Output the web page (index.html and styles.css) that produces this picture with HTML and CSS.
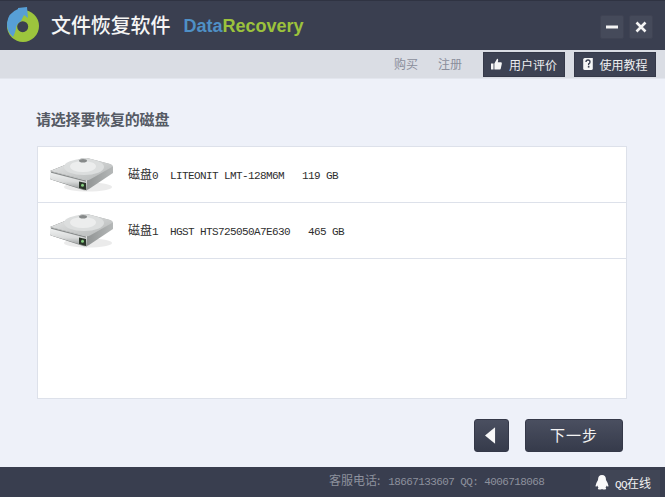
FILE: index.html
```html
<!DOCTYPE html>
<html lang="zh">
<head>
<meta charset="utf-8">
<title>文件恢复软件</title>
<link rel="stylesheet" href="styles.css">
</head>
<body>
<div class="window">
  <svg width="0" height="0" class="defs">
    <defs>
      <linearGradient id="top" x1="0" y1="0" x2="1" y2="1"><stop offset="0" stop-color="#e9eaea"/><stop offset="1" stop-color="#b4b7b7"/></linearGradient>
      <linearGradient id="front" x1="0" y1="0" x2="0" y2="1"><stop offset="0" stop-color="#f4f5f5"/><stop offset=".55" stop-color="#d8dada"/><stop offset="1" stop-color="#8c8f8f"/></linearGradient>
      <linearGradient id="side" x1="0" y1="0" x2="1" y2="0"><stop offset="0" stop-color="#5f6262"/><stop offset="1" stop-color="#b5b8b8"/></linearGradient>
      <filter id="soft"><feGaussianBlur stdDeviation=".4"/></filter>
      <symbol id="disk" viewBox="0 0 64 36">
        <g filter="url(#soft)">
          <ellipse cx="38" cy="30" rx="24" ry="4.500" fill="#dedede" opacity=".6"/>
          <path d="M0 14 L30 2 Q33 .5 37 1 L60 7 Q63 8 63 10 L63 16 L39 32 Q36 34 33 33 L1 22.500 Q0 22 0 21Z" fill="url(#side)"/>
          <path d="M0 14 L37 23 L37 33.500 L1 22.500 Q0 22 0 21Z" fill="url(#front)"/>
          <path d="M0 14 L30 2 Q33 .5 37 1 L60 7 Q63 8 62 10 L40 22.500 Q38 23.500 36 23Z" fill="url(#top)"/>
          <path d="M1 14.500 L36 23.500 L36 24.800 L1 15.800Z" fill="#8a8d8d"/>
          <ellipse cx="34" cy="10" rx="20" ry="8" fill="#dcdede"/>
          <ellipse cx="33" cy="9.500" rx="13" ry="5.500" fill="#eceded"/>
          <ellipse cx="33" cy="3.800" rx="4" ry="1.800" fill="#868989"/>
          <path d="M29 24.500 L36 26 L36 33 L29 31Z" fill="#2c362b"/>
          <circle cx="32.500" cy="28.300" r="1.500" fill="#86cc80"/>
        </g>
      </symbol>
    </defs>
  </svg>
  <header class="titlebar">
    <svg class="logo" width="36" height="38" viewBox="5 4 36 38">
      <circle cx="23" cy="26" r="16" fill="#9cc53d"/>
      <circle cx="22.700" cy="26.700" r="5.500" fill="#3a3f50"/>
      <path d="M13 37 Q6.500 31 7 23 Q8 13 18 9 L18 8 L27 7 L28 18 L24 15 L21 21 Q16 24 16 29 Q15 33 13 37Z" fill="#579fd6"/>
    </svg>
    <span class="app-name">文件恢复软件</span>
    <span class="brand"><span class="brand-data">Data</span><span class="brand-recovery">Recovery</span></span>
    <div class="win-controls">
      <button class="win-btn" type="button"><svg width="12" height="4" viewBox="0 0 12 4"><rect width="12" height="3" y=".5" fill="#f4f4f4"/></svg></button>
      <button class="win-btn" type="button"><svg width="12" height="12" viewBox="0 0 12 12"><path d="M1.500 1.500 L10.500 10.500 M10.500 1.500 L1.500 10.500" stroke="#f4f4f4" stroke-width="2.600"/></svg></button>
    </div>
  </header>
  <nav class="toolbar">
    <a class="link">购买</a>
    <a class="link link-reg">注册</a>
    <a class="tool-btn tool-first">
      <svg width="11" height="12" viewBox="0 0 13 14"><path d="M0 6.500 H3 V13.500 H0Z M4 6.500 L7 1 Q8.500 .5 8.500 2.500 L8 5 H12 Q13 5.500 12.800 6.800 L11.500 12.500 Q11 13.500 10 13.500 H4Z" fill="#f6f6f6"/></svg>
      <span>用户评价</span>
    </a>
    <a class="tool-btn">
      <svg width="10" height="12" viewBox="0 0 12 15"><path d="M2 0 H12 V13 Q12 15 10 15 H2 Q0 15 0 13 V2 Q0 0 2 0Z" fill="#f6f6f6"/><path d="M3.500 5 Q3.500 2.500 6 2.500 Q8.500 2.500 8.500 5 Q8.500 6.500 6.800 7.300 L6.800 9" fill="none" stroke="#3a3f50" stroke-width="1.700"/><rect x="5.800" y="10" width="2" height="2" fill="#3a3f50"/></svg>
      <span>使用教程</span>
    </a>
  </nav>
  <main class="content">
    <h1 class="heading">请选择要恢复的磁盘</h1>
    <ul class="disk-list">
      <li class="disk-row">
        <svg class="disk-icon" width="64" height="36"><use href="#disk"/></svg>
        <span class="disk-text"><span class="cjk">磁盘</span>0  LITEONIT LMT-128M6M   119 GB</span>
      </li>
      <li class="disk-row">
        <svg class="disk-icon" width="64" height="36"><use href="#disk"/></svg>
        <span class="disk-text"><span class="cjk">磁盘</span>1  HGST HTS725050A7E630   465 GB</span>
      </li>
    </ul>
    <div class="actions">
      <button class="nav-btn back" type="button" aria-label="上一步"><svg width="11" height="17" viewBox="0 0 12 18"><path d="M11 0 V18 L0 9Z" fill="#f8f8f8"/></svg></button>
      <button class="nav-btn next" type="button">下一步</button>
    </div>
  </main>
  <footer class="statusbar">
    <span class="contact"><span class="cjk cjk-label">客服电话:</span> 18667133607 QQ: 4006718068</span>
    <a class="qq">
      <svg width="14" height="15" viewBox="0 0 14 15"><path d="M7 0 Q11 0 11 5 Q13 8 13.500 11 Q13 12.500 11.500 10.500 Q11.500 12 10.500 12.800 Q12 14 10 14.500 H8 L7 14 L6 14.500 H4 Q2 14 3.500 12.800 Q2.500 12 2.500 10.500 Q1 12.500 .5 11 Q1 8 3 5 Q3 0 7 0Z" fill="#fafafa"/></svg>
      <span>QQ<span class="cjk">在线</span></span>
    </a>
  </footer>
</div>
</body>
</html>
```
FILE: styles.css
```css
* { box-sizing: border-box; }
html, body { margin: 0; padding: 0; }
body {
  width: 665px;
  height: 497px;
  overflow: hidden;
  font-family: "Noto Sans CJK SC", "Liberation Sans", sans-serif;
  font-size: 12px;
}
.defs { display: block; height: 0; }
.window {
  width: 665px;
  height: 497px;
  display: flex;
  flex-direction: column;
  background: #eef1f9;
}
.titlebar {
  height: 50px;
  flex: none;
  display: flex;
  align-items: center;
  padding: 0 12px 0 5px;
  background: #3a3f50;
  border-top: 1px solid #2f3342;
}
.logo { flex: none; margin-top: -5px; }
.app-name {
  margin-left: 10px;
  color: #f5f5f5;
  font-size: 20px;
  font-weight: 500;
  line-height: 24px;
  letter-spacing: -.1px;
  margin-top: -1px;
}
.brand {
  margin-left: 13px;
  margin-top: 1px;
  font-family: "Liberation Sans", sans-serif;
  font-size: 18px;
  font-weight: 700;
}
.brand-data { color: #4f90c6; }
.brand-recovery { color: #9cc23c; }
.win-controls {
  margin-left: auto;
  display: flex;
  gap: 5px;
  margin-top: 3px;
}
.win-btn {
  width: 24px;
  height: 24px;
  padding: 0;
  display: flex;
  align-items: center;
  justify-content: center;
  background: #454a5a;
  border: 1px solid #3f4353;
  border-radius: 2px;
}
.toolbar {
  height: 29px;
  flex: none;
  display: flex;
  align-items: center;
  padding: 0 9px 0 394px;
  background: #dadde4;
  border-bottom: 1px solid #e3e6ee;
}
.link { color: #8a8e9b; line-height: 16px; }
.link-reg { margin-left: 20px; }
.tool-btn {
  height: 25px;
  width: 82px;
  margin-left: 9px;
  display: flex;
  align-items: center;
  justify-content: center;
  gap: 7px;
  background: #3d4253;
  color: #eeeff1;
  border: 1px solid #343848;
}
.tool-first { margin-left: 21px; }
.content {
  flex: 1;
  display: flex;
  flex-direction: column;
  padding: 0 38px 15px 37px;
  min-height: 0;
}
.heading {
  margin: 30px 0 0 -1px;
  height: 37px;
  font-size: 15px;
  line-height: 20px;
  font-weight: 700;
  letter-spacing: -.2px;
  color: #555a64;
}
.disk-list {
  margin: 0;
  padding: 0;
  list-style: none;
  height: 253px;
  background: #fff;
  border: 1px solid #dde1ea;
}
.disk-row {
  height: 56px;
  display: flex;
  align-items: center;
  padding-left: 12px;
  border-bottom: 1px solid #dde1ea;
}
.disk-icon { flex: none; }
.disk-text {
  margin-left: 14px;
  margin-top: -2px;
  white-space: pre;
  font-family: "Liberation Mono", monospace;
  font-size: 11px;
  letter-spacing: -.6px;
  color: #2e2e2e;
}
.cjk {
  font-family: "Noto Sans CJK SC", sans-serif;
  font-size: 12px;
  letter-spacing: 0;
}
.actions {
  margin-top: 20px;
  display: flex;
  justify-content: flex-end;
  gap: 16px;
  padding-right: 4px;
}
.nav-btn {
  height: 33px;
  display: flex;
  align-items: center;
  justify-content: center;
  padding: 0;
  color: #f4f4f4;
  background: linear-gradient(#4a4f60, #363b4b);
  border: 1px solid #343848;
  border-radius: 3px;
  font-family: "Noto Sans CJK SC", sans-serif;
  font-size: 15px;
  letter-spacing: 1px;
}
.back { width: 35px; padding-right: 2px; }
.next { width: 98px; padding: 0 0 2px 0; }
.statusbar {
  height: 30px;
  flex: none;
  display: flex;
  align-items: flex-end;
  padding: 0 5px 0 329px;
  background: #393e4f;
}
.contact {
  align-self: center;
  margin-bottom: 5px;
  white-space: pre;
  font-family: "Liberation Mono", monospace;
  font-size: 11px;
  letter-spacing: -.6px;
  color: #8d919d;
}
.cjk-label { margin-right: 2px; }
.qq {
  margin-left: auto;
  width: 70px;
  height: 27px;
  display: flex;
  align-items: center;
  gap: 6px;
  padding: 0 0 2px 5px;
  background: #404555;
  color: #f2f2f2;
  font-family: "Liberation Mono", monospace;
  font-size: 11px;
  letter-spacing: -.6px;
}
```
